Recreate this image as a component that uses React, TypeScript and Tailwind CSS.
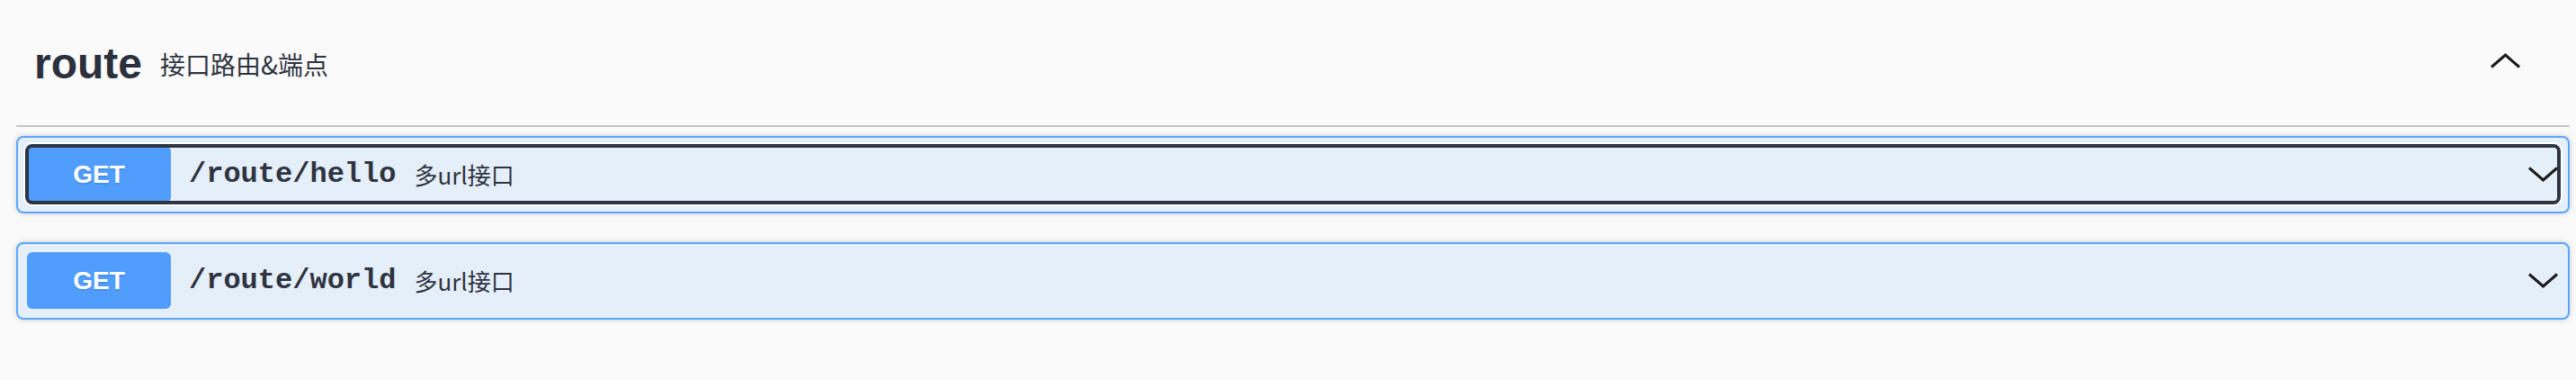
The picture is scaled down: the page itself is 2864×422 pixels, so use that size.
import React from "react";

const Chevron = ({ up }: { up?: boolean }) => (
  <svg width="35" height="17" viewBox="0 0 35 17" fill="none" stroke="#1b1b1b" strokeWidth="3" strokeLinejoin="miter">
    <polyline points={up ? "2,15.5 17.5,2 33,15.5" : "2,1.5 17.5,15 33,1.5"} />
  </svg>
);

const Op = ({ path, focused }: { path: string; focused?: boolean }) => (
  <div className="rounded-[8px] border-2 border-[#5aa6fd] bg-[#e5eff9] shadow-[0_0_6px_rgba(0,0,0,0.19)] px-[10px] pt-[9px] pb-[10px] mb-[32px]">
    <div
      className={
        "flex items-center h-[63px] rounded-[6px] " +
        (focused ? "outline-4 outline-solid outline-[#2f3441] -outline-offset-2 ring-4 ring-white" : "")
      }
    >
      <div className="w-[160px] h-[63px] shrink-0 rounded-[6px] bg-[#519dfe] flex items-center justify-center text-white font-bold text-[28px] [font-family:'Liberation_Sans',Arial,sans-serif] [text-shadow:0_2px_0_rgba(0,0,0,0.1)]">
        GET
      </div>
      <span className="pl-[20px] pr-[20px] text-[32px] font-bold text-[#2f3441] [font-family:'Liberation_Mono','Courier_New',monospace]">
        {path}
      </span>
      <span className="flex-1 text-[26px] text-[#2f3441] [font-family:'Noto_Sans_CJK_SC',sans-serif]">
        多url接口
      </span>
      <div className="shrink-0 flex items-center">
        <Chevron />
      </div>
    </div>
  </div>
);

export default function App() {
  return (
    <div className="w-full h-[422px] bg-[#fafafa] pl-[18px] pr-[7px] overflow-hidden">
      <div className="h-[141px] flex items-center border-b-2 border-[#c3c4c7] pt-[2px]">
        <div className="flex-1 flex items-center pl-[20px]">
          <span className="text-[48px] font-bold text-[#2b303c] [font-family:'Liberation_Sans',Arial,sans-serif]">
            route
          </span>
          <span className="pl-[20px] text-[28px] text-[#2f3441] [font-family:'Noto_Sans_CJK_SC',sans-serif]">
            接口路由&amp;端点
          </span>
        </div>
        <div className="mr-[54px] mb-[6px] flex items-center">
          <Chevron up />
        </div>
      </div>
      <div className="pt-[10px]">
        <Op path="/route/hello" focused />
        <Op path="/route/world" />
      </div>
    </div>
  );
}
